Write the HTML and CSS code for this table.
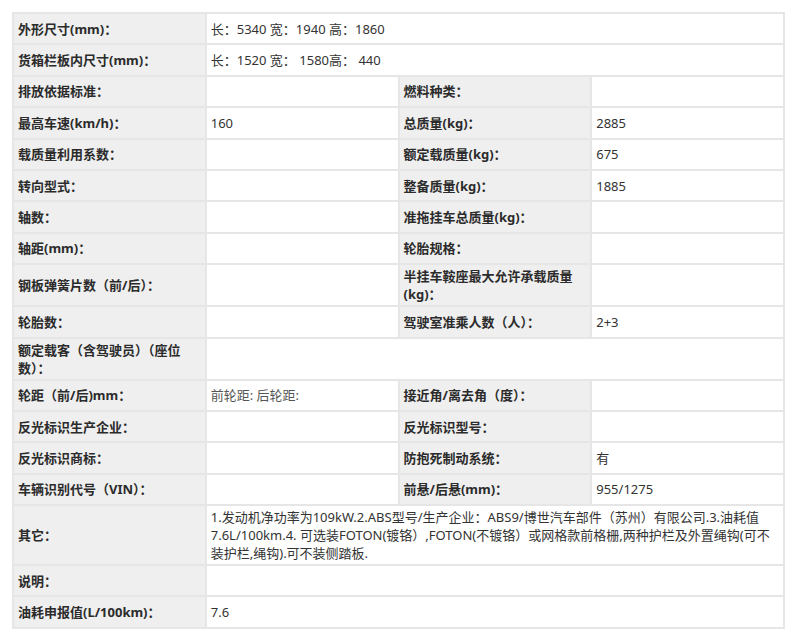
FILE: index.html
```html
<!DOCTYPE html>
<html lang="zh-CN">
<head>
<meta charset="utf-8">
<title>参数</title>
<link rel="stylesheet" href="styles.css">
</head>
<body>
<table class="spec">
  <colgroup><col class="c"><col class="c"><col class="c"><col class="c"></colgroup>
  <tr><th>外形尺寸(mm)：</th><td colspan="3">长：5340 宽：1940 高：1860</td></tr>
  <tr><th>货箱栏板内尺寸(mm)：</th><td colspan="3">长：1520 宽：&nbsp;1580高：&nbsp;440</td></tr>
  <tr><th>排放依据标准：</th><td></td><th>燃料种类：</th><td></td></tr>
  <tr><th>最高车速(km/h)：</th><td>160</td><th>总质量(kg)：</th><td>2885</td></tr>
  <tr><th>载质量利用系数：</th><td></td><th>额定载质量(kg)：</th><td>675</td></tr>
  <tr><th>转向型式：</th><td></td><th>整备质量(kg)：</th><td>1885</td></tr>
  <tr><th>轴数：</th><td></td><th>准拖挂车总质量(kg)：</th><td></td></tr>
  <tr><th>轴距(mm)：</th><td></td><th>轮胎规格：</th><td></td></tr>
  <tr><th>钢板弹簧片数（前/后）：</th><td></td><th>半挂车鞍座最大允许承载质量(kg)：</th><td></td></tr>
  <tr><th>轮胎数：</th><td></td><th>驾驶室准乘人数（人）：</th><td>2+3</td></tr>
  <tr><th>额定载客（含驾驶员）（座位数）：</th><td colspan="3"></td></tr>
  <tr><th>轮距（前/后)mm：</th><td class="muted">前轮距: 后轮距:</td><th>接近角/离去角（度）：</th><td></td></tr>
  <tr><th>反光标识生产企业：</th><td></td><th>反光标识型号：</th><td></td></tr>
  <tr><th>反光标识商标：</th><td></td><th>防抱死制动系统：</th><td>有</td></tr>
  <tr><th>车辆识别代号（VIN）：</th><td></td><th>前悬/后悬(mm)：</th><td>955/1275</td></tr>
  <tr><th>其它：</th><td colspan="3">1.发动机净功率为109kW.2.ABS型号/生产企业：ABS9/博世汽车部件（苏州）有限公司.3.油耗值 7.6L/100km.4. 可选装FOTON(镀铬）,FOTON(不镀铬）或网格款前格栅,两种护栏及外置绳钩(可不装护栏,绳钩).可不装侧踏板.</td></tr>
  <tr><th>说明：</th><td colspan="3"></td></tr>
  <tr><th>油耗申报值(L/100km)：</th><td colspan="3">7.6</td></tr>
</table>
</body>
</html>
```
FILE: styles.css
```css
html, body {
  margin: 0;
  background: #ffffff;
}
body {
  padding: 12px;
  font-family: "Noto Sans", "Noto Sans CJK SC", sans-serif;
  font-size: 13px;
  color: #333333;
}
.spec {
  width: 773px;
  table-layout: fixed;
  border-collapse: collapse;
  border: 2px solid #e9e9e9;
}
.spec .c {
  width: 25%;
}
.spec th,
.spec td {
  height: 25.4px;
  padding: 2px 4px;
  line-height: 18px;
  border: 2px solid #e6e6e6;
  text-align: left;
  vertical-align: middle;
}
.spec th {
  background: #efefef;
  font-weight: bold;
  color: #2b2b2b;
}
.spec td {
  background: #ffffff;
  font-weight: normal;
}
.spec td.muted {
  color: #555555;
}
```
